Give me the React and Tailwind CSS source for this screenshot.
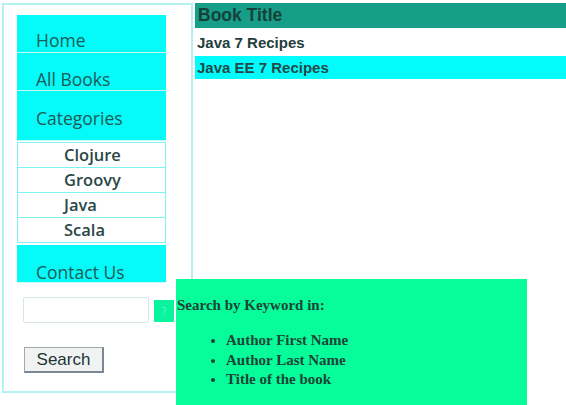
export default function App() {
  const nav = 'bg-[#04fbf8] text-[#1d5a57] text-[17.5px] pl-[19px] border-b border-[#c9f7f5]';
  const sub = ['Clojure', 'Groovy', 'Java', 'Scala'];

  return (
    <div className="w-[566px] h-[405px] bg-white flex overflow-hidden" style={{ fontFamily: '"Open Sans", sans-serif' }}>
      {/* Sidebar */}
      <div className="ml-[2px] mt-[3px] w-[191px] h-[390px] border-2 border-[#b4f1f1] pl-[13px] pt-[10px] shrink-0">
        <ul className="w-[149px]">
          <li className={`${nav} h-[38px] pt-[12px]`}>Home</li>
          <li className={`${nav} h-[38px] pt-[13px]`}>All Books</li>
          <li className={`${nav} h-[50px] pt-[14px]`}>Categories</li>
          <li className="py-[1px]">
            {sub.map((s) => (
              <div
                key={s}
                className="h-[26px] border border-[#7ff3f0] bg-white pl-[46px] text-[16.5px] font-semibold text-[#2a4746] leading-[23px] -mt-px first:mt-0"
              >
                {s}
              </div>
            ))}
          </li>
          <li className={`${nav} h-[38px] pt-[14px] mt-[1px]`}>Contact Us</li>
        </ul>
        <div className="flex items-center mt-[14px] ml-[6px]">
          <div className="w-[126px] h-[26px] border border-[#d7e6e6] rounded-[2px]" />
          <div className="ml-[5px] mt-[2px] w-[20px] h-[22px] bg-[#0af59b] text-[#5cf0f0] text-[11px] flex items-center justify-center">?</div>
        </div>
        <button
          className="mt-[24px] ml-[7px] w-[80px] h-[26px] bg-[#f1f3f3] border border-[#a0a8ae] border-b-2 border-r-2 border-b-[#7d8794] border-r-[#7d8794] text-[17px] text-[#1d3534] leading-none"
          style={{ fontFamily: '"Liberation Sans", Arial, sans-serif' }}
        >
          Search
        </button>
      </div>

      {/* Content */}
      <div className="flex-1 flex flex-col pt-[3px] pl-[2px]" style={{ fontFamily: '"Liberation Sans", Arial, sans-serif' }}>
        <div className="h-[25px] bg-[#169e89] text-[#17403a] font-bold text-[17.5px] pl-[3px] leading-[25px]">Book Title</div>
        <div className="h-[24px] mt-[2px] bg-white text-[#1f3e3c] font-bold text-[15px] pl-[2px] leading-[25px]">Java 7 Recipes</div>
        <div className="h-[23px] mt-[2px] bg-[#02fcfb] text-[#1f4a48] font-bold text-[15px] pl-[2px] leading-[23px]">Java EE 7 Recipes</div>

        <div
          className="mt-auto ml-[-19px] w-[351px] h-[126px] bg-[#06fd9a] relative z-10 text-[#1d4436] font-bold text-[15px] pt-[16px]"
          style={{ fontFamily: '"Liberation Serif", "Times New Roman", serif' }}
        >
          <p className="pl-[1px] leading-[20px]">Search by Keyword in:</p>
          <ul className="list-disc pl-[50px] mt-[16px] leading-[19.5px]">
            <li>Author First Name</li>
            <li>Author Last Name</li>
            <li>Title of the book</li>
          </ul>
        </div>
      </div>
    </div>
  );
}
